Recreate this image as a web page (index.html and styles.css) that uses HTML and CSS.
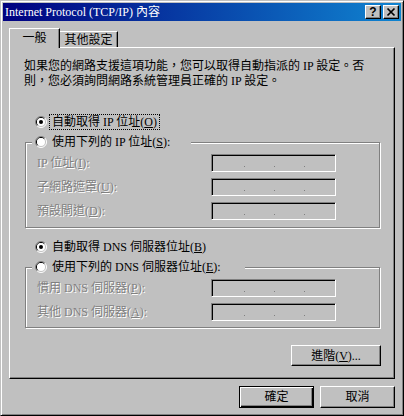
FILE: index.html
```html
<!DOCTYPE html>
<html lang="zh-Hant">
<head>
    <meta charset="UTF-8">
    <title>Internet Protocol (TCP/IP) 內容</title>
    <link rel="stylesheet" href="styles.css">
</head>
<body>
    <div class="window">
        <div class="titlebar">
            <span class="title">Internet Protocol (TCP/IP) 內容</span>
            <div class="caption-buttons">
                <span class="cap-btn help">?</span>
                <span class="cap-btn close">
                    <svg width="14" height="12" viewBox="0 0 14 12">
                        <path d="M3.5 2.5 L10.5 9.5 M10.5 2.5 L3.5 9.5" stroke="#000" stroke-width="1.7" fill="none"/>
                    </svg>
                </span>
            </div>
        </div>

        <div class="content">
            <div class="tabs">
                <div class="tab active">一般</div>
                <div class="tab">其他設定</div>
            </div>

            <div class="panel">
                <p class="intro">如果您的網路支援這項功能，您可以取得自動指派的 IP 設定。否<br>則，您必須詢問網路系統管理員正確的 IP 設定。</p>

                <div class="radio-row">
                    <svg class="radio" width="12" height="12" viewBox="0 0 12 12">
                        <path d="M9.9 2.1 A5.5 5.5 0 0 0 2.1 9.9" stroke="#808080" fill="none"/>
                        <path d="M9.9 2.1 A5.5 5.5 0 0 1 2.1 9.9" stroke="#fff" fill="none"/>
                        <path d="M9.2 2.8 A4.5 4.5 0 0 0 2.8 9.2" stroke="#000" fill="none"/>
                        <circle cx="6" cy="6" r="4" fill="#fff"/>
                        <circle cx="6" cy="6" r="2" fill="#000"/>
                    </svg>
                    <span class="radio-text focus">自動取得 IP 位址(<u>O</u>)</span>
                </div>

                <div class="group">
                    <div class="legend legend-ip">
                        <svg class="radio" width="12" height="12" viewBox="0 0 12 12">
                            <path d="M9.9 2.1 A5.5 5.5 0 0 0 2.1 9.9" stroke="#808080" fill="none"/>
                            <path d="M9.9 2.1 A5.5 5.5 0 0 1 2.1 9.9" stroke="#fff" fill="none"/>
                            <path d="M9.2 2.8 A4.5 4.5 0 0 0 2.8 9.2" stroke="#000" fill="none"/>
                            <circle cx="6" cy="6" r="4" fill="#fff"/>
                        </svg>
                        <span class="radio-text">使用下列的 IP 位址(<u>S</u>):</span>
                    </div>
                    <div class="fields">
                        <span class="disabled">IP 位址(<u>I</u>):</span>
                        <div class="ip-field"><i></i><i></i><i></i></div>
                        <span class="disabled">子網路遮罩(<u>U</u>):</span>
                        <div class="ip-field"><i></i><i></i><i></i></div>
                        <span class="disabled">預設閘道(<u>D</u>):</span>
                        <div class="ip-field"><i></i><i></i><i></i></div>
                    </div>
                </div>

                <div class="radio-row dns-auto">
                    <svg class="radio" width="12" height="12" viewBox="0 0 12 12">
                        <path d="M9.9 2.1 A5.5 5.5 0 0 0 2.1 9.9" stroke="#808080" fill="none"/>
                        <path d="M9.9 2.1 A5.5 5.5 0 0 1 2.1 9.9" stroke="#fff" fill="none"/>
                        <path d="M9.2 2.8 A4.5 4.5 0 0 0 2.8 9.2" stroke="#000" fill="none"/>
                        <circle cx="6" cy="6" r="4" fill="#fff"/>
                        <circle cx="6" cy="6" r="2" fill="#000"/>
                    </svg>
                    <span class="radio-text">自動取得 DNS 伺服器位址(<u>B</u>)</span>
                </div>

                <div class="group group-dns">
                    <div class="legend legend-dns">
                        <svg class="radio" width="12" height="12" viewBox="0 0 12 12">
                            <path d="M9.9 2.1 A5.5 5.5 0 0 0 2.1 9.9" stroke="#808080" fill="none"/>
                            <path d="M9.9 2.1 A5.5 5.5 0 0 1 2.1 9.9" stroke="#fff" fill="none"/>
                            <path d="M9.2 2.8 A4.5 4.5 0 0 0 2.8 9.2" stroke="#000" fill="none"/>
                            <circle cx="6" cy="6" r="4" fill="#fff"/>
                        </svg>
                        <span class="radio-text">使用下列的 DNS 伺服器位址(<u>E</u>):</span>
                    </div>
                    <div class="fields">
                        <span class="disabled">慣用 DNS 伺服器(<u>P</u>):</span>
                        <div class="ip-field"><i></i><i></i><i></i></div>
                        <span class="disabled">其他 DNS 伺服器(<u>A</u>):</span>
                        <div class="ip-field"><i></i><i></i><i></i></div>
                    </div>
                </div>

                <div class="advanced-row">
                    <button class="btn advanced">進階(<u>V</u>)...</button>
                </div>
            </div>

            <div class="dialog-buttons">
                <button class="btn default">確定</button>
                <button class="btn">取消</button>
            </div>
        </div>
    </div>
</body>
</html>
```

FILE: styles.css
```css
* {
    box-sizing: border-box;
}

body {
    margin: 0;
    background: #c0c0c0;
    font-family: "Liberation Serif", "Noto Sans CJK TC", serif;
    font-size: 12px;
    color: #000;
}

u {
    text-decoration: underline;
    text-underline-offset: 1px;
}

.window {
    width: 404px;
    height: 416px;
    padding: 2px;
    background: #c0c0c0;
    border: 1px solid;
    border-color: #c0c0c0 #000 #000 #c0c0c0;
    box-shadow: inset 1px 1px #fff, inset -1px -1px #808080;
}

/* title bar */
.titlebar {
    height: 18px;
    display: flex;
    align-items: center;
    padding: 0 2px;
    background: linear-gradient(to right, #000080, #1084d0);
}

.title {
    color: #fff;
    line-height: 18px;
    white-space: nowrap;
}

.caption-buttons {
    margin-left: auto;
    display: flex;
    gap: 2px;
}

.cap-btn {
    width: 16px;
    height: 14px;
    display: flex;
    align-items: center;
    justify-content: center;
    background: #c0c0c0;
    border: 1px solid;
    border-color: #fff #000 #000 #fff;
    box-shadow: inset -1px -1px #808080;
}

.help {
    font-family: "Liberation Sans", sans-serif;
    font-weight: bold;
    font-size: 12px;
    line-height: 12px;
    padding-bottom: 1px;
}

.content {
    padding: 0 6px;
}

/* tabs */
.tabs {
    margin-top: 7px;
    display: flex;
    align-items: flex-end;
    height: 19px;
}

.tab {
    height: 16px;
    width: 58px;
    line-height: 14px;
    text-align: center;
    border-top: 1px solid #fff;
    border-right: 1px solid #000;
    box-shadow: inset -1px 0 #808080;
    padding-top: 1px;
}

.tab.active {
    position: relative;
    z-index: 1;
    height: 20px;
    width: 51px;
    margin-bottom: -1px;
    background: #c0c0c0;
    border-left: 1px solid #fff;
    line-height: 16px;
    padding-top: 1px;
}

/* panel */
.panel {
    height: 332px;
    padding: 11px 13px 0 15px;
    border: 1px solid;
    border-color: #fff #000 #000 #fff;
    box-shadow: inset -1px -1px #808080;
}

.intro {
    margin: 0 0 0 -1px;
    line-height: 15px;
}

.radio-row {
    margin-top: 26px;
    height: 14px;
    display: flex;
    align-items: center;
    padding-left: 10px;
}

.radio-row.dns-auto {
    margin-top: 12px;
}

.radio {
    flex: none;
}

.radio-text {
    margin-left: 5px;
    line-height: 14px;
    white-space: nowrap;
}

.focus {
    display: inline-block;
    height: 14px;
    margin-left: 3px;
    padding: 0 2px;
    outline: 1px dotted #000;
}

/* group boxes */
.group {
    margin: 13px 1px 0 0;
    padding: 0 0 7px 11px;
    border: 1px solid #808080;
    box-shadow: 1px 1px 0 #fff, inset 1px 1px 0 #fff;
}

.group-dns {
    padding-bottom: 6px;
}

.legend {
    margin: -8px 0 0 -5px;
    padding-left: 3px;
    height: 14px;
    display: flex;
    align-items: center;
    background: #c0c0c0;
}

.legend-ip {
    width: 159px;
}

.legend-dns {
    width: 213px;
}

.fields {
    margin-top: 5px;
    display: grid;
    grid-template-columns: 174px 125px;
    row-gap: 6px;
    align-items: center;
}

.disabled {
    color: #808080;
    text-shadow: 1px 1px 0 #fff;
    line-height: 14px;
    white-space: nowrap;
}

.ip-field {
    height: 18px;
    display: flex;
    align-items: flex-end;
    gap: 29px;
    padding: 0 0 4px 32px;
    border: 1px solid;
    border-color: #808080 #fff #fff #808080;
    box-shadow: inset 1px 1px #000;
}

.ip-field i {
    width: 1px;
    height: 1px;
    background: #808080;
}

/* buttons */
.btn {
    font: inherit;
    color: #000;
    height: 22px;
    width: 75px;
    padding: 0;
    line-height: 18px;
    background: #c0c0c0;
    border: 1px solid;
    border-color: #fff #000 #000 #fff;
    box-shadow: inset -1px -1px #808080;
}

.btn.default {
    border-color: #000;
    box-shadow: inset 1px 1px #fff, inset -1px -1px #000, inset -2px -2px #808080;
}

.advanced-row {
    margin-top: 17px;
    display: flex;
    justify-content: flex-end;
}

.btn.advanced {
    width: 90px;
    height: 21px;
}

.dialog-buttons {
    margin-top: 7px;
    display: flex;
    justify-content: flex-end;
    gap: 6px;
}
```
